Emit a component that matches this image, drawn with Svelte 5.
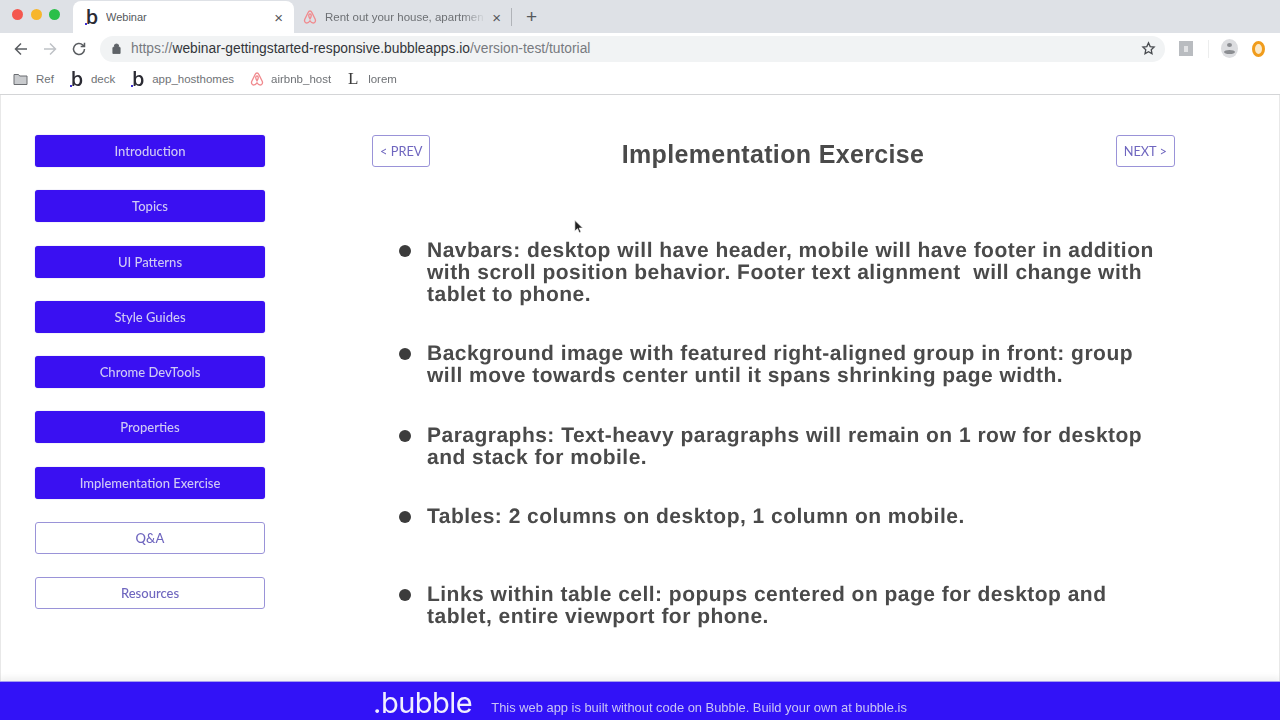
<script lang="ts">
  const nav = [
    { label: 'Introduction', filled: true },
    { label: 'Topics', filled: true },
    { label: 'UI Patterns', filled: true },
    { label: 'Style Guides', filled: true },
    { label: 'Chrome DevTools', filled: true },
    { label: 'Properties', filled: true },
    { label: 'Implementation Exercise', filled: true },
    { label: 'Q&A', filled: false },
    { label: 'Resources', filled: false },
  ];

  const points = [
    {
      lines: [
        'Navbars: desktop will have header, mobile will have footer in addition',
        'with scroll position behavior. Footer text alignment  will change with',
        'tablet to phone.',
      ],
    },
    {
      lines: [
        'Background image with featured right-aligned group in front: group',
        'will move towards center until it spans shrinking page width.',
      ],
    },
    {
      lines: [
        'Paragraphs: Text-heavy paragraphs will remain on 1 row for desktop',
        'and stack for mobile.',
      ],
    },
    { lines: ['Tables: 2 columns on desktop, 1 column on mobile.'], tall: true },
    {
      lines: [
        'Links within table cell: popups centered on page for desktop and',
        'tablet, entire viewport for phone.',
      ],
    },
  ];

  const airbnb = 'M12 3c-1.4 0-2.2 1-3 2.6L4.2 15.4C3 18 4.3 21 7.2 21c1.900 0 3.300-1.200 4.800-3.200 1.500 2 2.900 3.200 4.800 3.200 2.900 0 4.200-3 3-5.600L15 5.600C14.200 4 13.400 3 12 3zm0 4.500c1 0 1.900 1 1.900 2.400 0 1.500-.9 3.400-1.900 4.900-1-1.500-1.900-3.400-1.900-4.900 0-1.400.9-2.400 1.900-2.400z';
</script>

<div class="page">
  <div class="tabstrip">
    <div class="lights">
      <span class="light red"></span>
      <span class="light amber"></span>
      <span class="light green"></span>
    </div>
    <div class="tab active">
      <span class="blogo big">b</span>
      <span class="tab-title">Webinar</span>
      <span class="tab-x">×</span>
    </div>
    <div class="tab other">
      <svg class="abnb" viewBox="0 0 24 24"><path d={airbnb} /></svg>
      <span class="tab-title fade">Rent out your house, apartmen</span>
      <span class="tab-x">×</span>
    </div>
    <span class="tab-sep"></span>
    <span class="new-tab">+</span>
  </div>

  <div class="toolbar">
    <svg class="tool" viewBox="0 0 16 16"><path d="M14 8H2.500M8 2.500 2.500 8 8 13.500" /></svg>
    <svg class="tool dim" viewBox="0 0 16 16"><path d="M2 8h11.500M8 2.500 13.500 8 8 13.500" /></svg>
    <svg class="tool" viewBox="0 0 16 16"><path d="M13.500 8a5.500 5.500 0 1 1-1.700-4L13.500 5.600M13.500 1.800v3.800H9.700" /></svg>
    <div class="omnibox">
      <svg class="lock" viewBox="0 0 10 12"><path d="M2.500 5V3.500a2.500 2.500 0 0 1 5 0V5M1 5h8v6.500H1z" /></svg>
      <span class="url"><span class="scheme">https://</span>webinar-gettingstarted-responsive.bubbleapps.io<span class="scheme">/version-test/tutorial</span></span>
      <svg class="star" viewBox="0 0 16 16"><path d="m8 2 1.800 3.900 4.200.5-3.100 2.900.8 4.200L8 11.400 4.300 13.500l.8-4.200L2 6.400l4.200-.5z" /></svg>
    </div>
    <div class="ext-icons">
      <span class="ext-square"><i></i></span>
      <span class="ext-sep"></span>
      <span class="avatar"><i></i><b></b></span>
      <span class="ring"></span>
    </div>
  </div>

  <div class="bookmarks">
    <span class="mark">
      <svg class="folder" viewBox="0 0 14 12"><path d="M.5 1.500h4.500l1.200 1.500h7.300v8.500H.5z" /></svg>
      Ref
    </span>
    <span class="mark"><span class="blogo">b</span>deck</span>
    <span class="mark"><span class="blogo">b</span>app_hosthomes</span>
    <span class="mark">
      <svg class="abnb" viewBox="0 0 24 24"><path d={airbnb} /></svg>
      airbnb_host
    </span>
    <span class="mark"><span class="lorem-logo">L</span>lorem</span>
  </div>

  <div class="content">
    <nav class="sidebar">
      {#each nav as item}
        <button class="nav-btn" class:filled={item.filled}>{item.label}</button>
      {/each}
    </nav>

    <main class="main">
      <header class="head">
        <button class="pager">&lt; PREV</button>
        <h1>Implementation Exercise</h1>
        <button class="pager">NEXT &gt;</button>
      </header>

      <ul class="points">
        {#each points as point}
          <li class:tall={point.tall}>
            {#each point.lines as line}
              <span class="line">{line}</span>
            {/each}
          </li>
        {/each}
      </ul>
    </main>
  </div>

  <footer class="footer">
    <span class="wordmark">.bubble</span>
    <span class="footer-text">This web app is built without code on Bubble. Build your own at bubble.is</span>
  </footer>

  <svg class="cursor" viewBox="0 0 12 18"><path d="M1 1v13l3.200-3 2.200 5 2-.9-2.200-4.800H10.500z" /></svg>
</div>

<style>
  :global(body) {
    margin: 0;
    background: #fff;
  }

  .page {
    position: relative;
    width: 1280px;
    height: 720px;
    display: flex;
    flex-direction: column;
    overflow: hidden;
    font-family: "Liberation Sans", Arial, sans-serif;
    /* the reference is a soft video frame */
    filter: blur(0.35px);
  }

  /* browser chrome */
  .tabstrip {
    height: 33px;
    flex-shrink: 0;
    display: flex;
    align-items: flex-end;
    background: #dee1e6;
  }
  .lights {
    display: flex;
    gap: 7.500px;
    width: 73px;
    padding: 0 0 13px 12px;
    box-sizing: border-box;
  }
  .light {
    width: 11px;
    height: 11px;
    border-radius: 50%;
  }
  .red { background: #f4574f; }
  .amber { background: #f7b62c; }
  .green { background: #2bbf4a; }

  .tab {
    height: 32px;
    display: flex;
    align-items: center;
    box-sizing: border-box;
    font-size: 11px;
    color: #55585c;
  }
  .tab.active {
    width: 221px;
    padding: 0 11px 0 11px;
    background: #fff;
    border-radius: 8px 8px 0 0;
  }
  .tab.other {
    width: 218px;
    padding: 0 11px 0 8px;
  }
  .tab-title {
    flex: 1;
    margin-left: 6px;
    white-space: nowrap;
    overflow: hidden;
  }
  .tab-title.fade {
    margin-left: 7px;
    font-size: 11.500px;
    color: #6d7074;
    -webkit-mask-image: linear-gradient(90deg, #000 85%, transparent);
    mask-image: linear-gradient(90deg, #000 85%, transparent);
  }
  .tab-x {
    font-size: 15px;
    line-height: 1;
    color: #55585c;
    margin-left: 6px;
  }
  .tab-sep {
    width: 1px;
    height: 18px;
    margin: 0 0 7px -1px;
    background: #b0b3b8;
  }
  .new-tab {
    margin: 0 0 6px 14px;
    font-size: 19px;
    line-height: 20px;
    color: #55585c;
  }

  .blogo {
    position: relative;
    width: 16px;
    flex-shrink: 0;
    font-family: "Open Sans", sans-serif;
    font-size: 20px;
    font-weight: 600;
    line-height: 16px;
    text-align: center;
    color: #2b2b33;
  }
  .blogo::before {
    content: "";
    position: absolute;
    left: 1px;
    bottom: 0;
    width: 2px;
    height: 2px;
    background: #3b2fd0;
  }

  .abnb {
    width: 16px;
    height: 16px;
    flex-shrink: 0;
  }
  .abnb path {
    fill: none;
    stroke: #f08a8e;
    stroke-width: 2;
  }

  .toolbar {
    height: 31px;
    flex-shrink: 0;
    display: flex;
    align-items: center;
    padding-left: 13px;
    gap: 13px;
    background: #fff;
  }
  .tool {
    width: 16px;
    height: 16px;
    flex-shrink: 0;
  }
  .tool path {
    fill: none;
    stroke: #5a5d61;
    stroke-width: 1.500;
  }
  .tool.dim path {
    stroke: #bfc2c6;
  }
  .omnibox {
    width: 1065px;
    height: 26px;
    display: flex;
    align-items: center;
    box-sizing: border-box;
    padding: 0 9px 0 12px;
    background: #f1f3f4;
    border-radius: 13px;
  }
  .lock {
    width: 9px;
    height: 11px;
    flex-shrink: 0;
  }
  .lock path {
    fill: #5f6368;
    stroke: #5f6368;
    stroke-width: 1;
  }
  .url {
    flex: 1;
    margin-left: 10px;
    font-size: 13.800px;
    color: #33363a;
    white-space: nowrap;
  }
  .scheme {
    color: #777a7f;
  }
  .star {
    width: 15px;
    height: 15px;
  }
  .star path {
    fill: none;
    stroke: #4a4d51;
    stroke-width: 1.400;
  }
  .ext-icons {
    display: flex;
    align-items: center;
    margin-left: 1px;
  }
  .ext-square {
    width: 14px;
    height: 15px;
    display: flex;
    align-items: center;
    justify-content: center;
    background: #b9bcc0;
  }
  .ext-square i {
    width: 4px;
    height: 6px;
    background: #e2e3e5;
  }
  .ext-sep {
    width: 1px;
    height: 18px;
    margin: 0 12px 0 15px;
    background: #eceded;
  }
  .avatar {
    position: relative;
    width: 17px;
    height: 19px;
    border-radius: 50%;
    background: #dcdde0;
    overflow: hidden;
  }
  .avatar i {
    position: absolute;
    left: 6px;
    top: 4px;
    width: 5px;
    height: 4px;
    border-radius: 50%;
    background: #8b8d91;
  }
  .avatar b {
    position: absolute;
    left: 3px;
    top: 11px;
    width: 11px;
    height: 4px;
    border-radius: 50%;
    background: #8b8d91;
  }
  .ring {
    width: 7px;
    height: 10px;
    margin-left: 14px;
    border: 3px solid #f09c1c;
    border-radius: 50%;
    background: #fbe9c8;
  }

  .bookmarks {
    height: 31px;
    flex-shrink: 0;
    display: flex;
    align-items: center;
    gap: 15px;
    padding-left: 13px;
    box-sizing: border-box;
    border-bottom: 1px solid #d4d5d7;
    font-size: 11.500px;
    color: #6f7276;
    background: #fff;
  }
  .mark {
    display: flex;
    align-items: center;
    gap: 6px;
  }
  .folder {
    width: 15px;
    height: 12px;
    margin-right: 2px;
  }
  .folder path {
    fill: #c9cbce;
    stroke: #6a6d71;
    stroke-width: 1;
  }
  .lorem-logo {
    width: 14px;
    margin-right: 2px;
    font-family: "Liberation Serif", serif;
    font-size: 17px;
    line-height: 16px;
    text-align: center;
    color: #3a3a3a;
  }

  /* page */
  .content {
    flex: 1;
    min-height: 0;
    display: flex;
    padding-top: 40px;
    border-left: 1px solid #e8e8e8;
    border-right: 1px solid #e8e8e8;
  }
  .sidebar {
    width: 230px;
    margin-left: 34px;
    display: flex;
    flex-direction: column;
    gap: 23.250px;
    flex-shrink: 0;
  }
  .nav-btn {
    height: 32px;
    padding: 0;
    flex-shrink: 0;
    border: 1.500px solid #9a93d8;
    border-radius: 3px;
    background: #fff;
    color: #6f66bf;
    font-family: Lato, sans-serif;
    font-size: 13px;
    font-weight: 500;
  }
  .nav-btn.filled {
    border: none;
    background: #3a10f2;
    color: #cfc9f5;
    box-shadow: 0 0 1px #8c83d6;
  }

  .main {
    width: 803px;
    margin-left: 107px;
    flex-shrink: 0;
  }
  .head {
    display: flex;
    justify-content: space-between;
    align-items: flex-start;
  }
  .head h1 {
    margin: 5px 0 0;
    color: #4a4a4a;
    font-size: 25px;
    font-weight: 700;
    line-height: 28px;
    letter-spacing: 0.350px;
  }
  .pager {
    height: 32px;
    padding: 0 7px;
    box-sizing: border-box;
    border: 1.500px solid #9a93d8;
    border-radius: 3px;
    background: #fff;
    color: #6f66bf;
    font-family: Lato, sans-serif;
    font-size: 12.800px;
  }

  .points {
    list-style: none;
    margin: 72px 0 0;
    padding: 0 0 0 55px;
    display: flex;
    flex-direction: column;
    gap: 37.300px;
  }
  .points li {
    position: relative;
    font-size: 21px;
    font-weight: 700;
    line-height: 22px;
    letter-spacing: 0.480px;
    color: #4a4a4a;
    text-rendering: geometricPrecision;
  }
  .points li::before {
    content: "";
    position: absolute;
    left: -28px;
    top: 5px;
    width: 12px;
    height: 12px;
    border-radius: 50%;
    background: #3c3c3c;
  }
  .points li.tall {
    margin-bottom: 19px;
  }
  .line {
    display: block;
    white-space: pre;
  }

  .footer {
    height: 39px;
    flex-shrink: 0;
    display: flex;
    align-items: center;
    justify-content: center;
    gap: 19px;
    background: #3212f7;
    border-top: 1px solid #a49cf0;
    box-shadow: 0 -4px 6px rgba(0, 0, 0, 0.06);
    box-sizing: border-box;
  }
  .wordmark {
    margin-top: 4px;
    font-family: Inter, sans-serif;
    font-size: 29px;
    line-height: 30px;
    letter-spacing: -0.500px;
    color: #f0eefe;
  }
  .footer-text {
    margin-top: 12px;
    font-size: 12.900px;
    color: #c9c5f5;
  }

  .cursor {
    position: absolute;
    left: 574px;
    top: 219px;
    width: 10px;
    height: 16px;
  }
  .cursor path {
    fill: #222;
    stroke: #fff;
    stroke-width: 0.800;
  }
</style>
